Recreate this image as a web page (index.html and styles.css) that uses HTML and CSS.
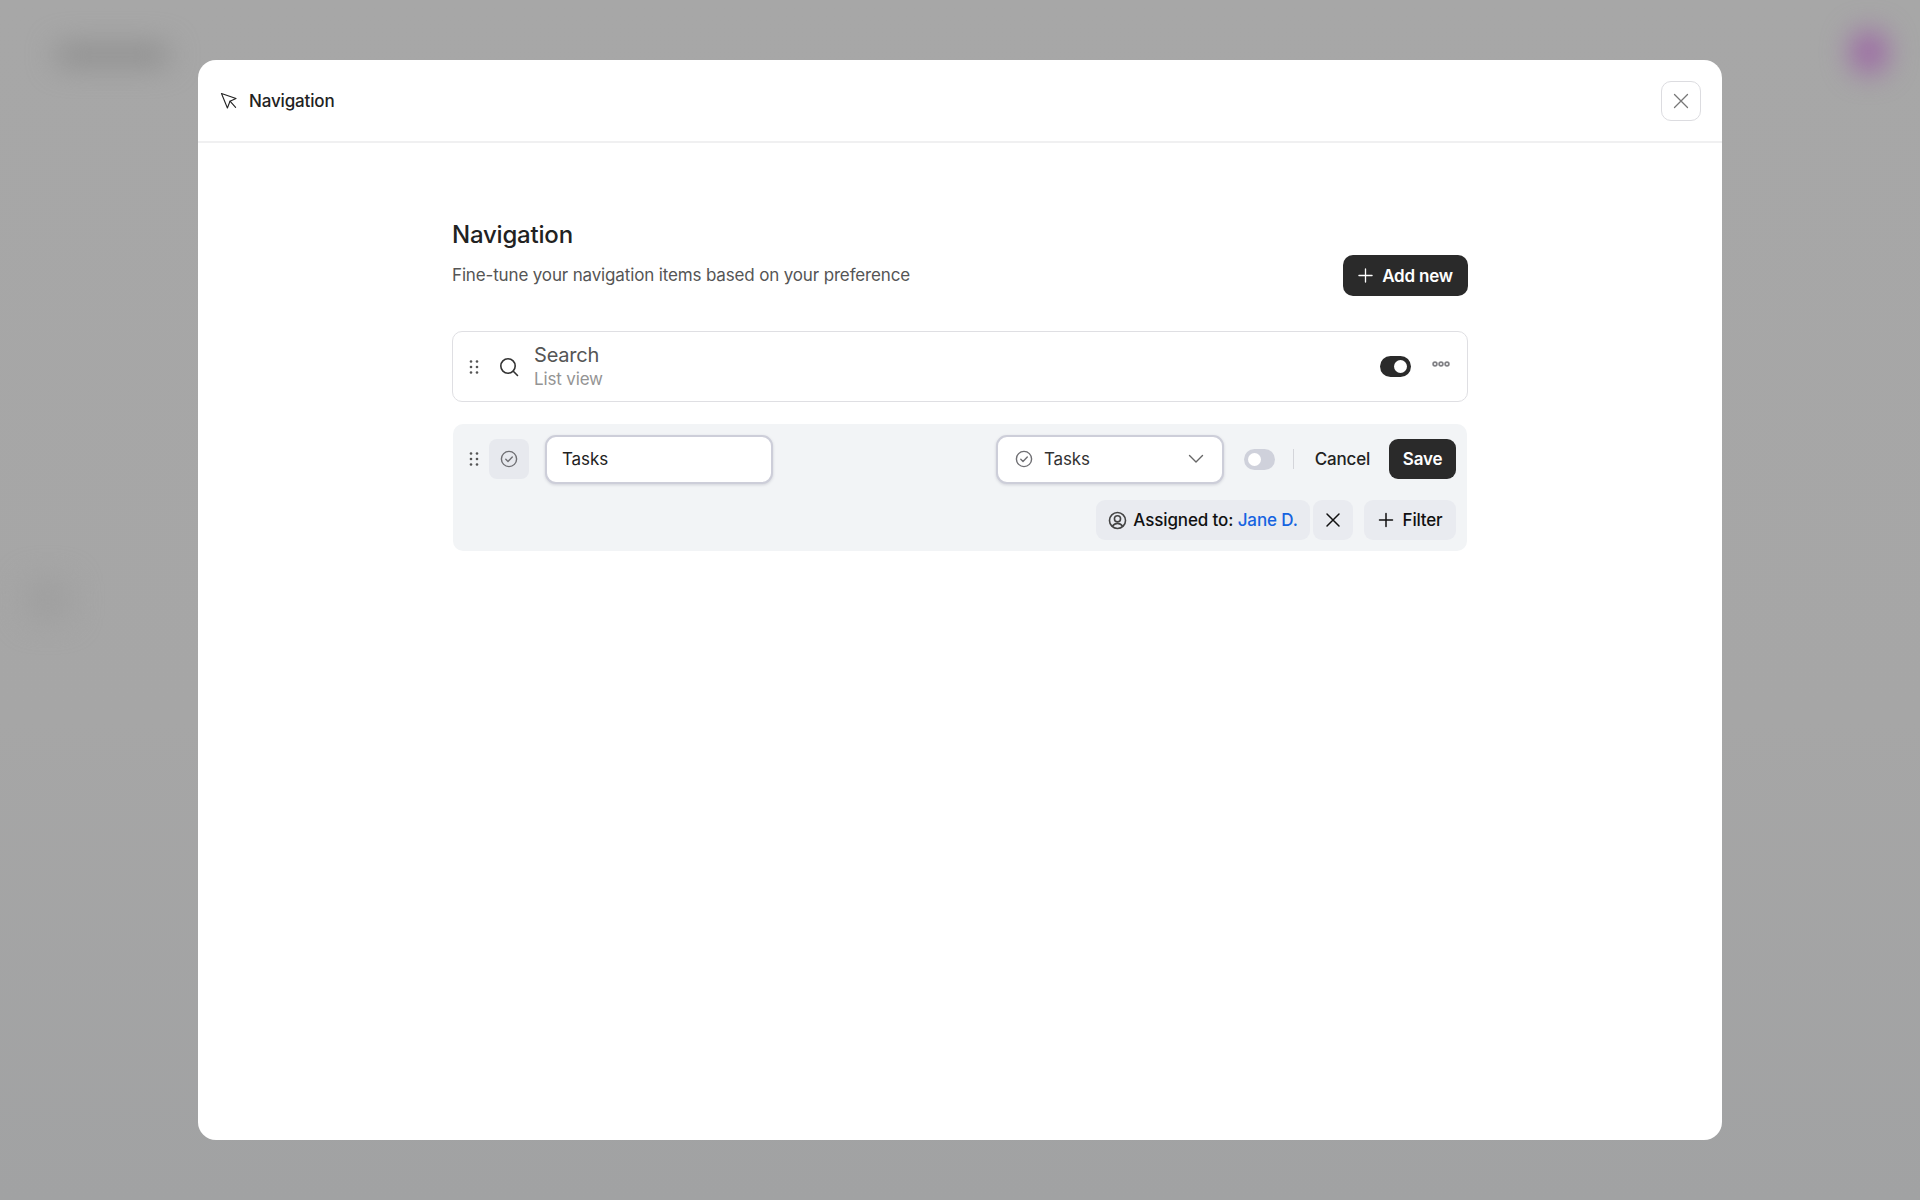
FILE: index.html
```html
<!DOCTYPE html>
<html lang="en">
<head>
<meta charset="utf-8">
<title>Navigation</title>
<link rel="stylesheet" href="styles.css">
</head>
<body>
<div class="backdrop">
  <div class="blob blob-logo"></div>
  <div class="blob blob-avatar"></div>
  <div class="blob blob-side"></div>
</div>
<main class="modal">
  <header class="modal-head">
    <div class="modal-title">
      <svg class="ic-cursor" viewBox="0 0 18 18" fill="none" stroke="#222" stroke-width="1.1" stroke-linejoin="round" stroke-linecap="round"><path d="M1.5 1.5 16 6.6 10 9.2 7.4 16Z"/><path d="M10 9.2 15.6 15.4"/></svg>
      <span>Navigation</span>
    </div>
    <button class="close-btn"><svg viewBox="0 0 16 16" fill="none" stroke="#777" stroke-width="1.3" stroke-linecap="round"><path d="M1.5 1.5 14.5 14.5M14.5 1.5 1.5 14.5"/></svg></button>
  </header>
  <section class="content">
    <div class="intro">
      <div>
        <h1>Navigation</h1>
        <p>Fine-tune your navigation items based on your preference</p>
      </div>
      <button class="btn-dark btn-add"><svg viewBox="0 0 16 16" fill="none" stroke="#fff" stroke-width="1.4" stroke-linecap="round"><path d="M8 1v14M1 8h14"/></svg>Add new</button>
    </div>

    <div class="row-search">
      <svg class="drag" viewBox="0 0 10 16" fill="#555"><circle cx="2" cy="2.5" r="1.3"/><circle cx="8" cy="2.5" r="1.3"/><circle cx="2" cy="8" r="1.3"/><circle cx="8" cy="8" r="1.3"/><circle cx="2" cy="13.5" r="1.3"/><circle cx="8" cy="13.5" r="1.3"/></svg>
      <svg class="ic-search" viewBox="0 0 20 20" fill="none" stroke="#333" stroke-width="1.6" stroke-linecap="round"><circle cx="9" cy="9" r="7.2"/><path d="M14.3 14.3 18.5 18.5"/></svg>
      <div class="labels">
        <div class="label-main">Search</div>
        <div class="label-sub">List view</div>
      </div>
      <div class="toggle toggle-on"><i></i></div>
      <svg class="dots" viewBox="0 0 18 6" fill="none" stroke="#828286" stroke-width="1.7"><circle cx="3" cy="3" r="1.9"/><circle cx="9" cy="3" r="1.9"/><circle cx="15" cy="3" r="1.9"/></svg>
    </div>

    <div class="panel">
      <div class="panel-top">
        <svg class="drag" viewBox="0 0 10 16" fill="#555"><circle cx="2" cy="2.5" r="1.3"/><circle cx="8" cy="2.5" r="1.3"/><circle cx="2" cy="8" r="1.3"/><circle cx="8" cy="8" r="1.3"/><circle cx="2" cy="13.5" r="1.3"/><circle cx="8" cy="13.5" r="1.3"/></svg>
        <div class="icon-box"><svg class="ic-check" viewBox="0 0 18 18" fill="none" stroke="#6f6f73" stroke-width="1.4" stroke-linecap="round" stroke-linejoin="round"><circle cx="9" cy="9" r="7.6"/><path d="M5.8 9.3 8 11.4 12.3 6.9"/></svg></div>
        <div class="field field-name">Tasks</div>
        <div class="field field-select">
          <svg class="ic-check" viewBox="0 0 18 18" fill="none" stroke="#6f6f73" stroke-width="1.4" stroke-linecap="round" stroke-linejoin="round"><circle cx="9" cy="9" r="7.6"/><path d="M5.8 9.3 8 11.4 12.3 6.9"/></svg>
          <span>Tasks</span>
          <svg class="chev" viewBox="0 0 16 10" fill="none" stroke="#666" stroke-width="1.4" stroke-linecap="round" stroke-linejoin="round"><path d="M1.5 1.5 8 8 14.5 1.5"/></svg>
        </div>
        <div class="toggle toggle-off"><i></i></div>
        <div class="divider"></div>
        <span class="cancel">Cancel</span>
        <button class="btn-dark btn-save">Save</button>
      </div>
      <div class="panel-filters">
        <div class="chip chip-assigned">
          <svg class="ic-user" viewBox="0 0 18 18" fill="none" stroke="#444" stroke-width="1.5"><circle cx="9" cy="9" r="7.6"/><circle cx="9" cy="7.4" r="2.9"/><path d="M4.2 14.6C5.2 12.6 7 11.7 9 11.7s3.8.9 4.8 2.9"/></svg>
          <span>Assigned to: <b>Jane D.</b></span>
        </div>
        <div class="chip chip-x"><svg viewBox="0 0 16 16" fill="none" stroke="#111" stroke-width="1.5" stroke-linecap="round"><path d="M2 2 14 14M14 2 2 14"/></svg></div>
        <div class="chip chip-filter"><svg viewBox="0 0 16 16" fill="none" stroke="#111" stroke-width="1.5" stroke-linecap="round"><path d="M8 1.5v13M1.5 8h13"/></svg>Filter</div>
      </div>
    </div>
  </section>
</main>
</body>
</html>
```

FILE: styles.css
```css
* { box-sizing: border-box; }
html, body { height: 100%; }
body {
  margin: 0;
  height: 1200px;
  overflow: hidden;
  display: flex;
  align-items: center;
  justify-content: center;
  background: linear-gradient(180deg, #a7a7a7 0%, #a6a6a6 60%, #a1a2a3 100%);
  font-family: Inter, "Liberation Sans", sans-serif;
  color: #222;
}
.backdrop { position: absolute; inset: 0; overflow: hidden; }
.blob { position: absolute; filter: blur(14px); }
.blob-logo { left: 55px; top: 44px; width: 115px; height: 22px; background: #8f8f8f; border-radius: 10px; }
.blob-avatar { left: 1850px; top: 30px; width: 38px; height: 44px; background: #9c68a4; border-radius: 50%; }
.blob-side { left: 24px; top: 578px; width: 48px; height: 44px; background: #a0a0a0; border-radius: 10px; }

.modal {
  position: relative;
  width: 1524px;
  height: 1080px;
  background: #fff;
  border-radius: 18px;
  display: flex;
  flex-direction: column;
}
.modal-head {
  height: 83px;
  flex: none;
  padding: 0 21px 0 20px;
  display: flex;
  align-items: center;
  justify-content: space-between;
  border-bottom: 2px solid #f0f0f1;
}
.modal-title {
  display: flex;
  align-items: center;
  gap: 11px;
  font-size: 17px;
  font-weight: 500;
  letter-spacing: -0.15px;
  color: #222;
}
.ic-cursor { width: 18px; height: 18px; margin-left: 2px; }
.close-btn {
  width: 40px;
  height: 40px;
  padding: 0;
  background: #fff;
  border: 1px solid #dcdce0;
  border-radius: 10px;
  display: flex;
  align-items: center;
  justify-content: center;
}
.close-btn svg { width: 16px; height: 16px; }

.content {
  width: 1016px;
  margin: 0 auto;
  padding-top: 76px;
}
.intro {
  display: flex;
  align-items: flex-end;
  justify-content: space-between;
}
h1 {
  margin: 0;
  font-size: 24px;
  line-height: 32px;
  font-weight: 550;
  letter-spacing: -0.2px;
  color: #222;
}
.intro p {
  margin: 13px 0 10px;
  font-size: 17px;
  line-height: 22px;
  color: #555;
  letter-spacing: -0.15px;
}
.btn-dark {
  border: 0;
  background: #2a2a2a;
  color: #fff;
  font-family: inherit;
  font-weight: 600;
  font-size: 17px;
  letter-spacing: -0.2px;
}
.btn-add {
  width: 125px;
  height: 41px;
  border-radius: 10px;
  display: flex;
  align-items: center;
  justify-content: center;
  gap: 9px;
  padding: 0;
}
.btn-add svg { width: 15px; height: 15px; }

.row-search {
  margin-top: 35px;
  height: 71px;
  border: 1px solid #dfdfe3;
  border-radius: 10px;
  display: flex;
  align-items: center;
  padding: 0 17px 0 16px;
}
.drag { width: 10px; height: 16px; flex: none; }
.ic-search { width: 20px; height: 20px; margin-left: 20px; flex: none; }
.labels { margin-left: 15px; flex: 1; }
.label-main { font-size: 20px; line-height: 26px; color: #555; letter-spacing: -0.2px; margin-top: -1px; }
.label-sub { font-size: 17px; line-height: 22px; color: #949494; letter-spacing: -0.15px; }

.toggle {
  width: 31px;
  height: 21px;
  border-radius: 11px;
  position: relative;
  flex: none;
}
.toggle i {
  position: absolute;
  top: 4px;
  width: 13px;
  height: 13px;
  background: #fff;
  border-radius: 50%;
}
.toggle-on { background: #2a2a2a; }
.toggle-on i { right: 4px; }
.toggle-off { background: #cfd1db; }
.toggle-off i { left: 4px; }
.dots { width: 18px; height: 6px; margin: -6px 0 0 21px; flex: none; }

.panel {
  margin: 22px 1px 0;
  height: 127px;
  background: #f2f4f6;
  border-radius: 10px;
  padding: 15px 11px 10px 16px;
}
.panel-top { display: flex; align-items: center; height: 40px; }
.icon-box {
  width: 40px;
  height: 40px;
  margin-left: 10px;
  background: #e7e9ee;
  border-radius: 8px;
  display: flex;
  align-items: center;
  justify-content: center;
}
.ic-check { width: 18px; height: 18px; flex: none; }
.field {
  height: 49px;
  background: #fff;
  border-radius: 11px;
  border: 2px solid #cdced9;
  box-shadow: 0 1px 3px rgba(60, 60, 90, 0.18);
  font-size: 17px;
  letter-spacing: -0.1px;
  display: flex;
  align-items: center;
}
.field-name {
  width: 228px;
  margin-left: 16px;
  padding-left: 15px;
  color: #222;
}
.field-select {
  width: 228px;
  margin-left: 223px;
  padding: 0 18px 0 17px;
  color: #333;
}
.field-select span { flex: 1; margin-left: 11px; }
.chev { width: 16px; height: 10px; }
.toggle-off { margin-left: 20px; }
.divider { width: 1px; height: 20px; background: #d4d5da; margin: 0 20px 0 18px; }
.cancel { font-size: 17px; font-weight: 500; color: #222; letter-spacing: -0.2px; margin-left: 1px; }
.btn-save {
  width: 67px;
  height: 40px;
  margin-left: 19px;
  border-radius: 9px;
  padding: 0;
}
.panel-filters {
  margin-top: 21px;
  display: flex;
  justify-content: flex-end;
  align-items: center;
}
.chip {
  height: 40px;
  background: #e9ebf0;
  border-radius: 9px;
  display: flex;
  align-items: center;
  justify-content: center;
  font-size: 17px;
  font-weight: 500;
  letter-spacing: -0.2px;
  color: #111;
}
.chip-assigned { width: 214px; gap: 6px; letter-spacing: -0.12px; }
.chip-assigned b { font-weight: 500; color: #1663e0; }
.ic-user { width: 19px; height: 19px; }
.chip-x { width: 40px; margin-left: 3px; }
.chip-x svg { width: 16px; height: 16px; }
.chip-filter { width: 92px; margin-left: 11px; gap: 9px; }
.chip-filter svg { width: 16px; height: 16px; }
```
